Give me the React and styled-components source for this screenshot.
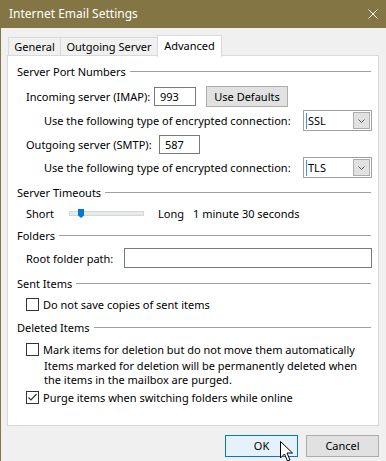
import React from 'react';
import styled, { createGlobalStyle } from 'styled-components';

const GlobalStyle = createGlobalStyle`
  html, body {
    margin: 0;
    padding: 0;
    background: #f0f0f0;
  }
  body {
    font-family: "Noto Sans", "Open Sans", sans-serif;
    font-size: 11px;
    color: #000;
  }
`;

const Window = styled.div`
  position: relative;
  width: 386px;
  height: 461px;
  box-sizing: border-box;
  border-left: 1px solid #847545;
  background: #f0f0f0;
  overflow: hidden;
`;

const TitleBar = styled.div`
  height: 28px;
  background: #847545;
  display: flex;
  align-items: center;
  justify-content: space-between;
  padding: 0 8px 0 8px;
  margin-left: -1px;
  color: #fff;
  font-size: 12px;
`;

const Title = styled.span`
  padding-left: 1px;
  margin-top: -2px;
`;

const Body = styled.div`
  padding: 7px 7px 0 6px;
`;

const TabStrip = styled.div`
  display: flex;
  align-items: flex-end;
  height: 20px;
  padding-left: 1px;
`;

const Tab = styled.div`
  position: relative;
  z-index: ${({ active }) => (active ? 2 : 1)};
  box-sizing: border-box;
  width: ${({ w }) => w}px;
  height: ${({ active }) => (active ? 22 : 18)}px;
  margin-bottom: ${({ active }) => (active ? -2 : 0)}px;
  margin-left: ${({ first }) => (first ? 0 : -1)}px;
  border: 1px solid #d9d9d9;
  border-bottom: none;
  background: ${({ active }) => (active ? '#fff' : '#f0f0f0')};
  display: flex;
  justify-content: center;
  padding-top: ${({ active }) => (active ? 2 : 1)}px;
  line-height: 15px;
`;

const Panel = styled.div`
  box-sizing: border-box;
  height: 371px;
  border: 1px solid #d9d9d9;
  background: #fff;
  padding: 0 6px 0 9px;
  display: flex;
  flex-direction: column;
`;

const Header = styled.div`
  display: flex;
  align-items: center;
  gap: 4px;
  height: 16px;
  margin-top: ${({ mt }) => mt}px;
  margin-right: 1px;

  &::after {
    content: '';
    flex: 1;
    height: 1px;
    background: #a0a0a0;
  }
`;

const Row = styled.div`
  display: flex;
  align-items: center;
  height: ${({ h }) => h || 20}px;
  margin-top: ${({ mt }) => mt}px;
  padding-left: ${({ indent }) => indent}px;
`;

const Label = styled.span`
  width: ${({ w }) => (w ? `${w}px` : 'auto')};
  margin-left: ${({ ml }) => ml || 0}px;
  flex-shrink: 0;
  white-space: nowrap;
`;

const TextBox = styled.div`
  box-sizing: border-box;
  width: ${({ w }) => (w ? `${w}px` : 'auto')};
  flex: ${({ grow }) => (grow ? 1 : 'none')};
  height: ${({ h }) => h || 19}px;
  border: 1px solid #7a7a7a;
  background: #fff;
  display: flex;
  align-items: center;
  padding-left: 5px;
`;

const Button = styled.div`
  box-sizing: border-box;
  width: ${({ w }) => w}px;
  height: ${({ h }) => h}px;
  margin-left: ${({ ml }) => ml || 0}px;
  border: 1px solid ${({ primary }) => (primary ? '#0078d7' : '#adadad')};
  background: ${({ primary }) => (primary ? '#e5f1fb' : '#e1e1e1')};
  display: flex;
  align-items: center;
  justify-content: center;
  padding-bottom: 1px;
`;

const Select = styled.div`
  box-sizing: border-box;
  width: 69px;
  height: 21px;
  margin-left: auto;
  border: 1px solid #a0a0a0;
  background: #fff;
  display: flex;
  align-items: center;
  padding: 0 1px 0 2px;
`;

const Caret = styled.span`
  width: 1px;
  height: 16px;
  background: #3d95e0;
  margin-right: 1px;
`;

const SelectValue = styled.span`
  flex: 1;
`;

const DropButton = styled.div`
  box-sizing: border-box;
  width: 17px;
  height: 17px;
  border: 1px solid #adadad;
  background: #e1e1e1;
  display: flex;
  align-items: center;
  justify-content: center;
`;

const SliderTrack = styled.div`
  position: relative;
  box-sizing: border-box;
  width: 75px;
  height: 5px;
  margin: 0 14px 0 15px;
  background: #e7eaea;
  border: 1px solid #d6d6d6;
`;

const Thumb = styled.svg`
  position: absolute;
  left: 8px;
  top: -3px;
`;

const CheckRow = styled.div`
  display: flex;
  align-items: center;
  gap: 4px;
  height: 14px;
  margin-top: ${({ mt }) => mt}px;
  padding-left: 9px;
  white-space: nowrap;
`;

const Box = styled.div`
  box-sizing: border-box;
  width: 13px;
  height: 13px;
  border: 1px solid #333;
  background: #fff;
  display: flex;
  align-items: center;
  justify-content: center;
`;

const Note = styled.div`
  margin-top: 3px;
  padding-left: 27px;
  line-height: 14px;
`;

const Footer = styled.div`
  display: flex;
  justify-content: flex-end;
  gap: 8px;
  margin-top: 9px;
`;

const Cursor = styled.svg`
  position: absolute;
  left: 279px;
  top: 441px;
`;

const Chevron = () => (
  <svg width="7" height="4" viewBox="0 0 7 4">
    <path d="M0.5 0.5 L3.5 3.5 L6.5 0.5" fill="none" stroke="#555" strokeWidth="1" />
  </svg>
);

const Checkbox = ({ checked }) => (
  <Box>
    {checked && (
      <svg width="11" height="11" viewBox="0 0 11 11">
        <path d="M1.5 5.5 L4 8 L9.5 2" fill="none" stroke="#333" strokeWidth="1.2" />
      </svg>
    )}
  </Box>
);

const Dropdown = ({ value }) => (
  <Select>
    <Caret />
    <SelectValue>{value}</SelectValue>
    <DropButton>
      <Chevron />
    </DropButton>
  </Select>
);

export default function App() {
  return (
    <>
      <GlobalStyle />
      <Window>
        <TitleBar>
          <Title>Internet Email Settings</Title>
          <svg width="10" height="10" viewBox="0 0 10 10">
            <path d="M0.5 0.5 L9.5 9.5 M9.5 0.5 L0.5 9.5" stroke="#fff" strokeWidth="1" />
          </svg>
        </TitleBar>
        <Body>
          <TabStrip>
            <Tab first w={53}>General</Tab>
            <Tab w={98}>Outgoing Server</Tab>
            <Tab active w={65}>Advanced</Tab>
          </TabStrip>
          <Panel>
            <Header mt={7}>Server Port Numbers</Header>
            <Row mt={7} h={21} indent={9}>
              <Label w={128}>Incoming server (IMAP):</Label>
              <TextBox w={42}>993</TextBox>
              <Button w={82} h={21} ml={10}>Use Defaults</Button>
            </Row>
            <Row mt={3} h={21} indent={27}>
              <Label>Use the following type of encrypted connection:</Label>
              <Dropdown value="SSL" />
            </Row>
            <Row mt={3} h={20} indent={9}>
              <Label w={133}>Outgoing server (SMTP):</Label>
              <TextBox w={41}>587</TextBox>
            </Row>
            <Row mt={3} h={21} indent={27}>
              <Label>Use the following type of encrypted connection:</Label>
              <Dropdown value="TLS" />
            </Row>

            <Header mt={6}>Server Timeouts</Header>
            <Row mt={5} h={16} indent={9}>
              <Label>Short</Label>
              <SliderTrack>
                <Thumb width="6" height="9" viewBox="0 0 6 9">
                  <path d="M0 0 H6 V6.5 L3 9 L0 6.5 Z" fill="#0078d7" />
                </Thumb>
              </SliderTrack>
              <Label>Long</Label>
              <Label ml={9}>1 minute 30 seconds</Label>
            </Row>

            <Header mt={6}>Folders</Header>
            <Row mt={5} h={20} indent={9}>
              <Label w={98}>Root folder path:</Label>
              <TextBox grow h={20} />
            </Row>

            <Header mt={7}>Sent Items</Header>
            <CheckRow mt={6}>
              <Checkbox />
              <span>Do not save copies of sent items</span>
            </CheckRow>

            <Header mt={8}>Deleted Items</Header>
            <CheckRow mt={7}>
              <Checkbox />
              <span>Mark items for deletion but do not move them automatically</span>
            </CheckRow>
            <Note>
              Items marked for deletion will be permanently deleted when
              <br />
              the items in the mailbox are purged.
            </Note>
            <CheckRow mt={3}>
              <Checkbox checked />
              <span>Purge items when switching folders while online</span>
            </CheckRow>
          </Panel>
          <Footer>
            <Button primary w={73} h={22}>OK</Button>
            <Button w={73} h={22}>Cancel</Button>
          </Footer>
        </Body>
        <Cursor width="14" height="22" viewBox="0 0 14 22">
          <path d="M0.5 0.5 V17 L4.5 13 L7.5 20 L10 19 L7 12 H12.5 Z" fill="#fff" stroke="#000" strokeWidth="1" />
        </Cursor>
      </Window>
    </>
  );
}
